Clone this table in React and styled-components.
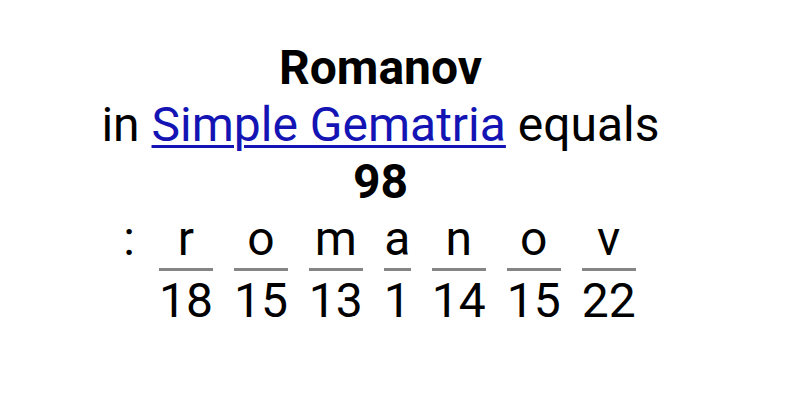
import React from "react";
import styled, { createGlobalStyle } from "styled-components";

const GlobalStyle = createGlobalStyle`
  body {
    margin: 0;
    background: #fff;
    font-family: Roboto, "Noto Sans", sans-serif;
    color: #000;
  }
`;

const letters = [
  ["r", 18],
  ["o", 15],
  ["m", 13],
  ["a", 1],
  ["n", 14],
  ["o", 15],
  ["v", 22],
];

const App = () => {
  return (
    <>
      <GlobalStyle />
      <Wrapper>
        <Word>Romanov</Word>
        <Line>
          in <a href="#simple">Simple Gematria</a> equals
        </Line>
        <Total>98</Total>
        <Breakdown>
          <Colon>:</Colon>
          {letters.map(([ch, n], i) => (
            <Fraction key={i}>
              <Letter>{ch}</Letter>
              <Value>{n}</Value>
            </Fraction>
          ))}
        </Breakdown>
      </Wrapper>
    </>
  );
};

const Wrapper = styled.div`
  width: 761px;
  padding-top: 39px;
  display: flex;
  flex-direction: column;
  align-items: center;
  font-size: 48px;
  line-height: 57px;
  text-align: center;

  a {
    color: #1414b4;
    text-decoration: underline;
    text-decoration-thickness: 3px;
    text-underline-offset: 4px;
  }
`;

const Word = styled.div`
  font-weight: 700;
`;

const Line = styled.div``;

const Total = styled.div`
  font-weight: 700;
`;

const Breakdown = styled.div`
  display: flex;
  align-items: flex-start;
  gap: 21px;
  margin-top: 5px;
  margin-left: -2px;
`;

const Colon = styled.div`
  line-height: 48px;
  margin-right: 3px;
`;

const Fraction = styled.div`
  display: flex;
  flex-direction: column;
  align-items: stretch;
`;

const Letter = styled.div`
  line-height: 48px;
  padding-bottom: 5px;
  border-bottom: 3px solid #858585;
`;

const Value = styled.div`
  line-height: 59px;
`;

export default App;
